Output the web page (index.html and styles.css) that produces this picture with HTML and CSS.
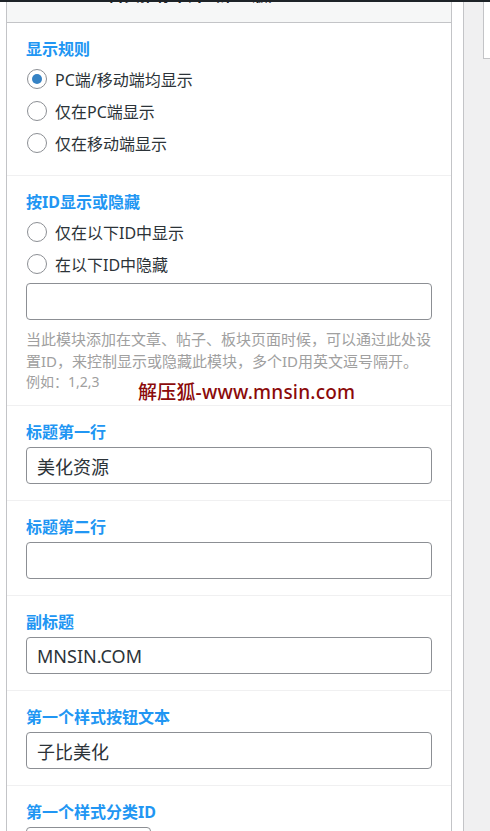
FILE: index.html
```html
<!DOCTYPE html>
<html lang="zh-CN">
<head>
<meta charset="utf-8">
<title>模块设置</title>
<link rel="stylesheet" href="styles.css">
</head>
<body>
<div class="topbar"></div>
<div class="layout">
  <div class="panel">
    <div class="panel-head"><span class="panel-title">首页推荐卡片（第一版）</span></div>

    <div class="section">
      <div class="label">显示规则</div>
      <label class="radio-row"><input type="radio" name="show" checked><span>PC端/移动端均显示</span></label>
      <label class="radio-row"><input type="radio" name="show"><span>仅在PC端显示</span></label>
      <label class="radio-row"><input type="radio" name="show"><span>仅在移动端显示</span></label>
    </div>

    <div class="section section-id">
      <div class="label">按ID显示或隐藏</div>
      <label class="radio-row"><input type="radio" name="byid"><span>仅在以下ID中显示</span></label>
      <label class="radio-row"><input type="radio" name="byid"><span>在以下ID中隐藏</span></label>
      <input class="field field-gap" type="text" value="">
      <p class="desc">当此模块添加在文章、帖子、板块页面时候，可以通过此处设置ID，来控制显示或隐藏此模块，多个ID用英文逗号隔开。</p>
      <p class="example">例如：1,2,3</p>
      <div class="watermark">解压狐-www.mnsin.com</div>
    </div>

    <div class="section">
      <div class="label label-field">标题第一行</div>
      <input class="field" type="text" value="美化资源">
    </div>

    <div class="section">
      <div class="label label-field">标题第二行</div>
      <input class="field" type="text" value="">
    </div>

    <div class="section">
      <div class="label label-field">副标题</div>
      <input class="field" type="text" value="MNSIN.COM">
    </div>

    <div class="section">
      <div class="label label-field">第一个样式按钮文本</div>
      <input class="field" type="text" value="子比美化">
    </div>

    <div class="section">
      <div class="label label-field">第一个样式分类ID</div>
      <input class="field field-short" type="text" value="">
    </div>
  </div>
  <div class="gutter"></div>
  <div class="side">
    <div class="side-box"></div>
  </div>
</div>
</body>
</html>
```

FILE: styles.css
```css
* {
  box-sizing: border-box;
}

html, body {
  margin: 0;
  padding: 0;
  background: #ffffff;
  height: 100%;
  overflow: hidden;
}

body {
  font-family: "Noto Sans", "Noto Sans CJK SC", sans-serif;
  color: #2c3338;
}

.topbar {
  height: 2px;
  background: #1d2327;
}

.layout {
  display: flex;
  height: calc(100% - 2px);
  padding-left: 6px;
}

.panel {
  width: 446px;
  flex: none;
  border-left: 1px solid #c3c4c7;
  border-right: 1px solid #c3c4c7;
  background: #ffffff;
}

.panel-head {
  height: 21px;
  background: #f6f7f7;
  border-bottom: 1px solid #c3c4c7;
  overflow: hidden;
  padding-left: 101px;
}

.panel-title {
  display: block;
  font-size: 16px;
  font-weight: 600;
  line-height: 20px;
  margin-top: -17px;
  color: #1d2327;
  white-space: nowrap;
}

.section {
  padding: 16px 19px 16px;
  border-bottom: 1px solid #f0f0f1;
}

.section-id {
  position: relative;
  padding-bottom: 14px;
}

.label {
  font-size: 16px;
  font-weight: 700;
  line-height: 20px;
  color: #2196f3;
  margin-bottom: 4px;
}

.label-field {
  margin-bottom: 5px;
}

.radio-row {
  display: flex;
  align-items: center;
  height: 32px;
  font-size: 16px;
  color: #2c3338;
  cursor: pointer;
}

.radio-row input {
  appearance: none;
  -webkit-appearance: none;
  width: 20px;
  height: 20px;
  margin: 0 8px 0 1px;
  border: 1px solid #8c8f94;
  border-radius: 50%;
  background: #ffffff;
  display: grid;
  place-items: center;
  flex: none;
}

.radio-row input:checked::before {
  content: "";
  width: 10px;
  height: 10px;
  border-radius: 50%;
  background: #3582c4;
}

.field {
  display: block;
  width: 100%;
  height: 37px;
  border: 1px solid #8c8f94;
  border-radius: 4px;
  background: #ffffff;
  padding: 0 10px;
  font-family: "Noto Sans", "Noto Sans CJK SC", sans-serif;
  font-size: 18px;
  color: #2c3338;
  outline: none;
}

.field-gap {
  margin-top: 3px;
}

.field-short {
  width: 125px;
}

.desc {
  margin: 8px 0 0;
  font-size: 15px;
  line-height: 22px;
  color: #a0a0a0;
}

.example {
  margin: 0;
  font-size: 14px;
  line-height: 19px;
  color: #a0a0a0;
}

.watermark {
  position: absolute;
  left: 131px;
  top: 205px;
  font-size: 19px;
  line-height: 22px;
  font-weight: 500;
  color: #8b0a0a;
  white-space: nowrap;
  letter-spacing: 0.2px;
}

.gutter {
  width: 11px;
  flex: none;
}

.side {
  flex: 1;
  border-left: 1px solid #c3c4c7;
  background: #f0f0f1;
  padding-left: 19px;
}

.side-box {
  height: 57px;
  background: #ffffff;
  border-left: 1px solid #c3c4c7;
  border-bottom: 1px solid #c3c4c7;
}
```
